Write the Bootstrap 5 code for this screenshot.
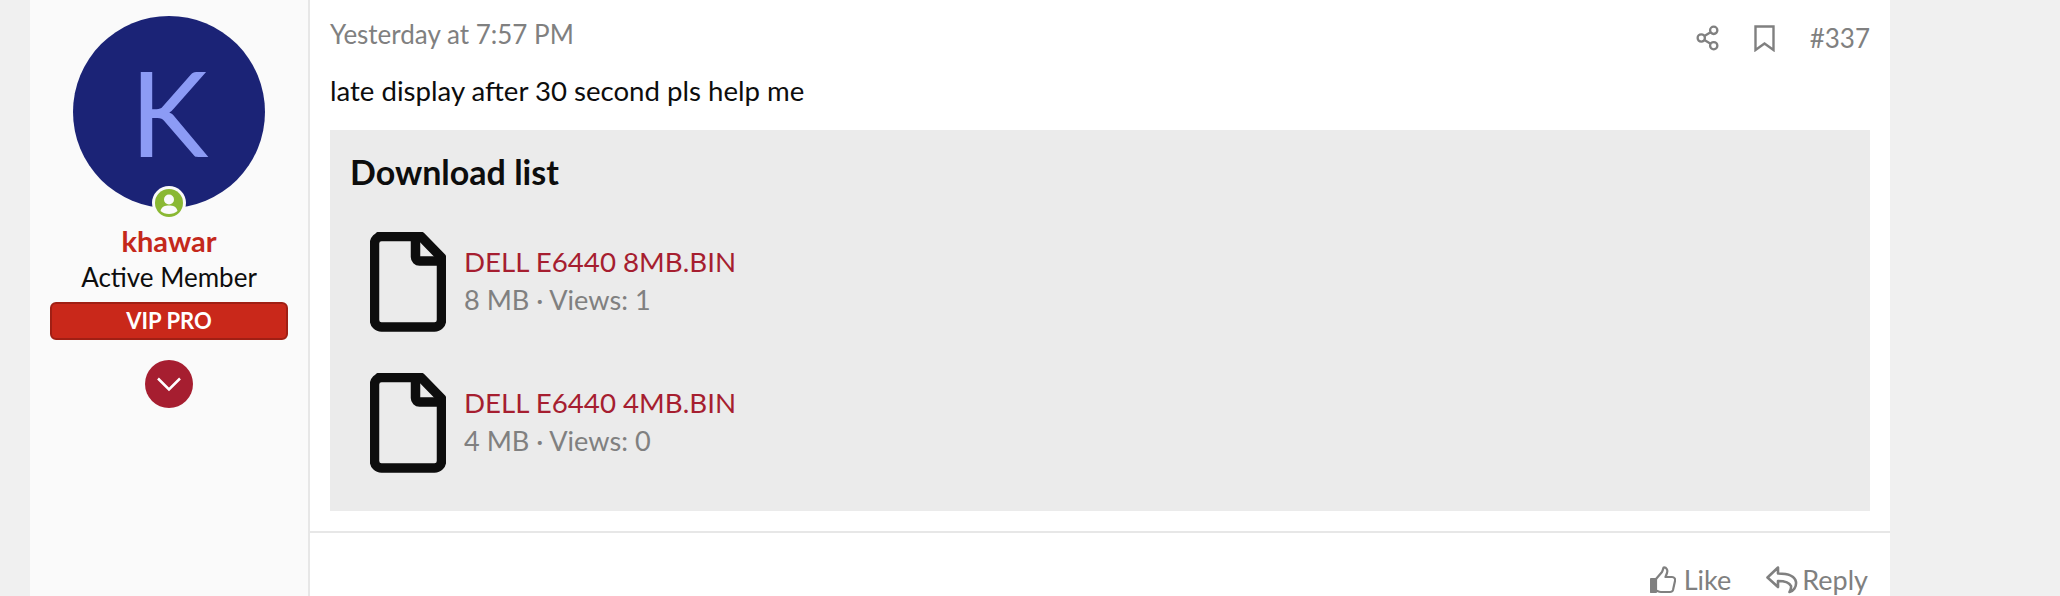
<!DOCTYPE html>
<html lang="en">
<head>
    <meta charset="UTF-8">
    <title>Post #337</title>
    <link href="https://cdn.jsdelivr.net/npm/bootstrap@5.3.2/dist/css/bootstrap.min.css" rel="stylesheet">
    <style>
        html, body {
            height: 596px;
            overflow: hidden;
        }
        body {
            font-family: 'Lato', sans-serif;
            background-color: #f0f0f0;
            color: #0d0d0d;
            font-size: 26px;
        }
        .post-wrap {
            margin-left: 30px;
            width: 1860px;
            height: 596px;
        }
        .post-user {
            width: 280px;
            background: #fafafa;
            border-right: 2px solid #e7e7e7;
            padding: 16px 20px 0;
        }
        .avatar-box {
            width: 192px;
            height: 192px;
        }
        .avatar-round {
            width: 192px;
            height: 192px;
            background: #1b2376;
            color: #8c9bf5;
            font-size: 118px;
            line-height: 192px;
        }
        .status-dot {
            left: 79px;
            top: 170px;
            width: 34px;
            height: 34px;
            background: #fafafa;
        }
        .user-name {
            color: #c4281b;
            font-size: 29px;
            font-weight: 700;
            line-height: 34px;
            margin-top: 16px;
        }
        .user-title {
            font-size: 26px;
            line-height: 38px;
        }
        .vip-banner {
            background: #c9281a;
            border: 2px solid #a01f14;
            border-radius: 6px;
            color: #fff;
            font-size: 22px;
            font-weight: 700;
            line-height: 34px;
            height: 38px;
            width: 238px;
            margin-top: 6px;
        }
        .expand-btn {
            width: 48px;
            height: 48px;
            background: #a61e30;
            margin-top: 20px;
        }
        .post-main {
            width: 1580px;
            background: #fff;
        }
        .post-body {
            padding: 0 20px;
        }
        .post-head {
            height: 71px;
            color: #808080;
        }
        .post-time {
            font-size: 26px;
            line-height: 30px;
            margin-top: 19px;
        }
        .post-tools {
            margin-top: 21px;
            height: 34px;
            font-size: 26px;
            line-height: 34px;
            gap: 35px;
        }
        .post-msg {
            font-size: 27.6px;
            line-height: 40px;
            height: 59px;
        }
        .attach-box {
            background: #ebebeb;
            height: 381px;
            padding: 20px 20px 0;
        }
        .attach-title {
            font-size: 34px;
            font-weight: 700;
            line-height: 44px;
            margin: 0 0 38px;
        }
        .attach-list {
            padding-left: 20px;
            gap: 41px;
        }
        .attach-row {
            gap: 18px;
        }
        .attach-text {
            margin-top: -2px;
        }
        .attach-name {
            color: #a61e30;
            font-size: 27.7px;
            line-height: 38px;
            text-decoration: none;
        }
        .attach-meta {
            color: #808080;
            font-size: 27.1px;
            line-height: 38px;
        }
        .post-foot {
            border-top: 2px solid #e7e7e7;
            margin-top: 20px;
            padding: 30px 22px 0 0;
            color: #808080;
            font-size: 27px;
            line-height: 34px;
            gap: 35px;
        }
    </style>
</head>
<body>
    <div class="post-wrap d-flex">
        <div class="post-user flex-shrink-0 d-flex flex-column align-items-center text-center">
            <div class="avatar-box position-relative">
                <div class="avatar-round rounded-circle">K</div>
                <div class="status-dot position-absolute rounded-circle d-flex align-items-center justify-content-center">
                    <svg width="28" height="28" viewBox="0 0 28 28">
                        <circle cx="14" cy="14" r="14" fill="#8ab833"/>
                        <circle cx="14" cy="10.5" r="5" fill="#fafafa"/>
                        <path d="M5.5 22c1-4.500 4.500-5.500 8.500-5.500s7.500 1 8.500 5.500c-2.200 2-5.200 3-8.500 3s-6.300-1-8.500-3z" fill="#fafafa"/>
                    </svg>
                </div>
            </div>
            <div class="user-name">khawar</div>
            <div class="user-title">Active Member</div>
            <div class="vip-banner">VIP PRO</div>
            <div class="expand-btn rounded-circle d-flex align-items-center justify-content-center">
                <svg width="26" height="16" viewBox="0 0 26 16" fill="none" stroke="#fff" stroke-width="2.500">
                    <path d="M2 2.500l11 11 11-11"/>
                </svg>
            </div>
        </div>

        <div class="post-main">
            <div class="post-body">
                <div class="post-head d-flex justify-content-between">
                    <div class="post-time">Yesterday at 7:57 PM</div>
                    <div class="post-tools d-flex align-items-center">
                        <svg width="23" height="26" viewBox="0 0 24 26" fill="none" stroke="#808080" stroke-width="2.400">
                            <circle cx="5.500" cy="13" r="3.800"/>
                            <circle cx="18.500" cy="5" r="3.800"/>
                            <circle cx="18.500" cy="21" r="3.800"/>
                            <path d="M8.800 11l6.400-4M8.800 15l6.400 4"/>
                        </svg>
                        <svg width="21" height="27" viewBox="0 0 21 27" fill="none" stroke="#808080" stroke-width="2.400">
                            <path d="M1.500 25V1.500h18V25l-9-6.500z"/>
                        </svg>
                        <span>#337</span>
                    </div>
                </div>
                <div class="post-msg">late display after 30 second pls help me</div>
                <div class="attach-box">
                    <h3 class="attach-title">Download list</h3>
                    <div class="attach-list d-flex flex-column">
                        <div class="attach-row d-flex align-items-center">
                            <svg width="76" height="100" viewBox="0 0 76 100" fill="none" stroke="#0d0d0d" stroke-width="9.500" stroke-linejoin="round">
                                <path d="M9 4.500h42l20.500 21V88a7 7 0 0 1-7 7H11.500a7 7 0 0 1-7-7V11.500a7 7 0 0 1 7-7z"/>
                                <path d="M45.500 5v20a4 4 0 0 0 4 4h22"/>
                            </svg>
                            <div class="attach-text">
                                <a class="attach-name d-block" href="#">DELL E6440 8MB.BIN</a>
                                <div class="attach-meta">8 MB · Views: 1</div>
                            </div>
                        </div>
                        <div class="attach-row d-flex align-items-center">
                            <svg width="76" height="100" viewBox="0 0 76 100" fill="none" stroke="#0d0d0d" stroke-width="9.500" stroke-linejoin="round">
                                <path d="M9 4.500h42l20.500 21V88a7 7 0 0 1-7 7H11.500a7 7 0 0 1-7-7V11.500a7 7 0 0 1 7-7z"/>
                                <path d="M45.500 5v20a4 4 0 0 0 4 4h22"/>
                            </svg>
                            <div class="attach-text">
                                <a class="attach-name d-block" href="#">DELL E6440 4MB.BIN</a>
                                <div class="attach-meta">4 MB · Views: 0</div>
                            </div>
                        </div>
                    </div>
                </div>
            </div>
            <div class="post-foot d-flex justify-content-end">
                <div class="d-flex align-items-center gap-2">
                    <svg width="26" height="28" viewBox="0 0 26 28" fill="none" stroke="#808080" stroke-width="2.200" stroke-linejoin="round">
                        <rect x="1" y="13" width="5" height="13" fill="#808080"/>
                        <path d="M6 13l6-7c1-2 1-3 1.500-4.500 3-.5 4.500 2.500 3.500 5.500l-1.500 4H22c2.500 0 3.500 2 3 4l-2 9c-.5 1.500-1.500 2-3 2H11c-2 0-3.500-1-5-1.500"/>
                    </svg>
                    <span>Like</span>
                </div>
                <div class="d-flex align-items-center gap-1">
                    <svg width="32" height="28" viewBox="0 0 32 28" fill="none" stroke="#808080" stroke-width="2.600" stroke-linejoin="round">
                        <path d="M12 1.500L1.500 11.500 12 21v-6c6 0 11 .5 13 5 .5 2-.5 4-1.500 6 4-1 7-5 6.500-10-1-6-7-8.500-18-8.500z"/>
                    </svg>
                    <span>Reply</span>
                </div>
            </div>
        </div>
    </div>
    <script src="https://cdn.jsdelivr.net/npm/bootstrap@5.3.2/dist/js/bootstrap.bundle.min.js"></script>
</body>
</html>
